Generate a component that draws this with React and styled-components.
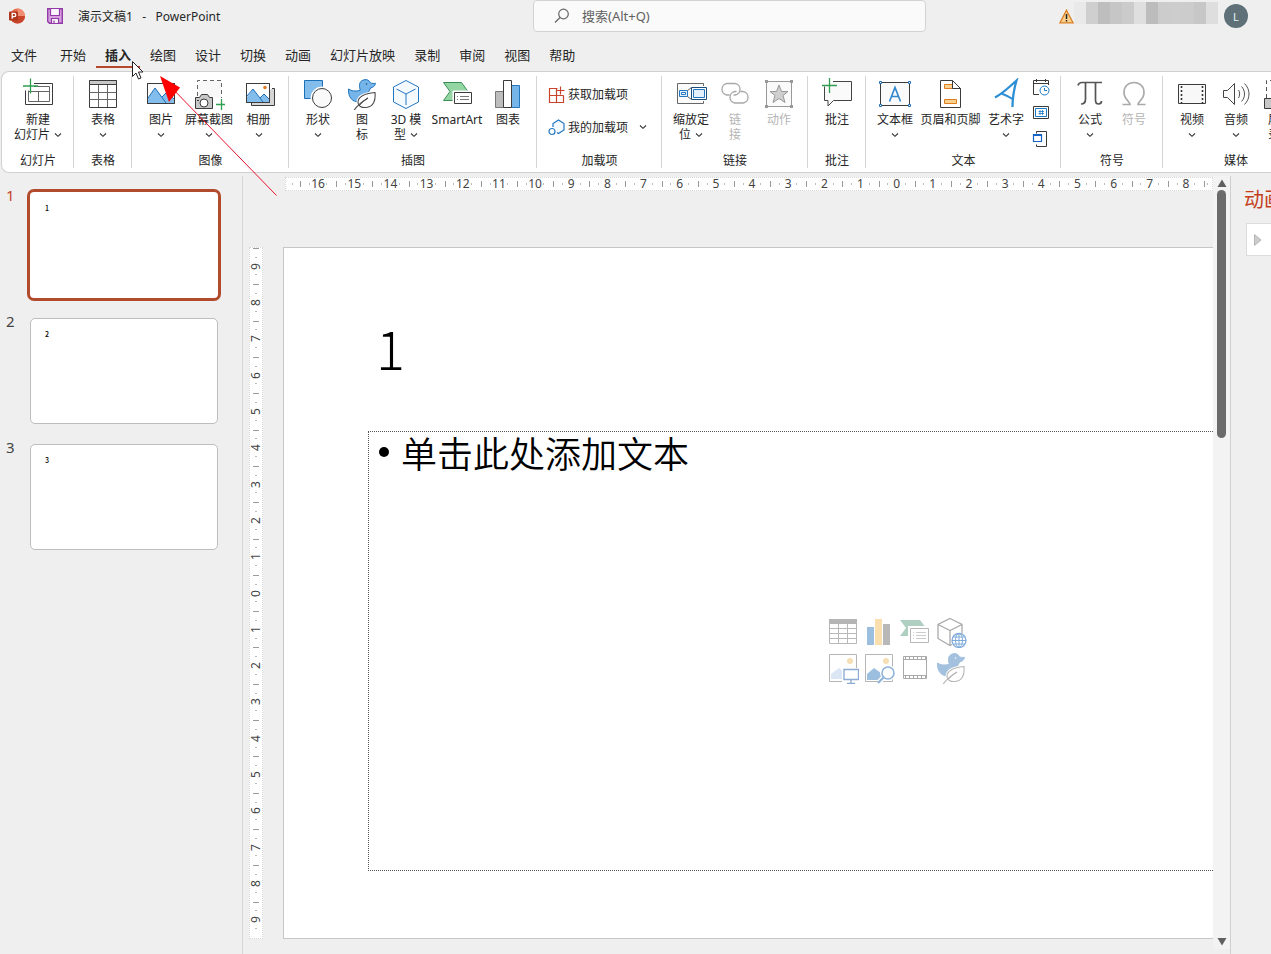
import styled, { createGlobalStyle, css } from 'styled-components';

const GlobalStyle = createGlobalStyle`
    * {
        box-sizing: border-box;
    }

    body {
        margin: 0;
        background: #efefef;
        color: #262626;
        font-family: 'Noto Sans', 'Noto Sans CJK SC', sans-serif;
        font-size: 12px;
    }

    button {
        padding: 0;
        border: 0;
        background: none;
        color: inherit;
        font: inherit;
    }
`;

const Window = styled.div`
    position: relative;
    display: flex;
    flex-direction: column;
    height: 100vh;
    overflow: hidden;
`;

const TitleBar = styled.header`
    display: grid;
    grid-template-columns: 533fr 393fr 345fr;
    height: 32px;
`;

const FileInfo = styled.div`
    display: flex;
    align-items: center;
    gap: 22px;
    padding-left: 9px;

    svg {
        display: block;
    }
`;

const SaveButton = styled.button`
    width: 16px;
    height: 16px;
`;

const FileName = styled.span`
    margin-left: -7px;
    white-space: pre;
`;

const SearchBox = styled.label`
    display: flex;
    align-items: center;
    gap: 12px;
    padding-left: 20px;
    border: 1px solid #d2d2d2;
    border-radius: 4px;
    background: #fafafa;

    input {
        flex: 1;
        min-width: 0;
        padding: 0;
        border: 0;
        outline: 0;
        background: none;
        font: inherit;
        font-size: 13px;
    }

    input::placeholder {
        color: #616161;
    }
`;

const Account = styled.div`
    display: flex;
    align-items: center;
    justify-content: flex-end;
    padding-right: 23px;
`;

const HiddenName = styled.div`
    display: flex;
    height: 22px;
    margin: 0 6px 6px 0;
`;

const NameBlock = styled.span`
    width: 12px;
    background: ${props => props.$tone};
`;

const Avatar = styled.button`
    width: 24px;
    height: 24px;
    border-radius: 50%;
    background: #5f7078;
    color: #e6f3f6;
    font-size: 11px;
`;

const Tabs = styled.nav`
    display: flex;
    gap: 1px;
    padding: 8px 0 3px 2px;
`;

const Tab = styled.button`
    height: 28px;
    padding: 4px 9px 0;
    margin-right: ${props => props.$file ? '4px' : '0'};
    border-bottom: 2px solid ${props => props.$active ? '#b7472a' : 'transparent'};
    font-size: 13px;
    line-height: 22px;
    white-space: nowrap;
    ${props => props.$active && css`
        font-weight: 700;
    `}
`;

const RibbonBar = styled.section`
    display: flex;
    flex: none;
    height: 102px;
    margin-left: 1px;
    overflow: hidden;
    border: 1px solid #d0d0d0;
    border-right: 0;
    border-radius: 8px 0 0 8px;
    background: #fff;
`;

const Group = styled.div`
    display: flex;
    flex: none;
    flex-direction: column;
    justify-content: space-between;
    margin: 4px 0;
    padding: 2px 6px 0 7px;
    border-right: 1px solid #d4d4d4;
`;

const GroupTools = styled.div`
    display: flex;
`;

const GroupName = styled.div`
    line-height: 14px;
    text-align: center;
`;

const ToolButton = styled.button`
    display: flex;
    flex-direction: column;
    align-items: center;
    width: ${props => props.$width || 44}px;
    color: ${props => props.disabled ? '#b4b4b4' : 'inherit'};
    line-height: 15px;
    white-space: nowrap;

    > svg {
        margin-bottom: 2px;
    }
`;

const ToolLine = styled.span`
    display: flex;
    align-items: center;
    justify-content: center;
    gap: 4px;
    height: 15px;
`;

const AddinList = styled.div`
    display: flex;
    flex-direction: column;
    gap: 9px;
    width: 111px;
    padding: 4px 0 0 4px;
`;

const AddinButton = styled.button`
    display: flex;
    align-items: center;
    gap: 3px;
    height: 24px;
    white-space: nowrap;

    svg:nth-of-type(2) {
        margin-left: 8px;
    }
`;

const SmallTools = styled.div`
    display: flex;
    flex-direction: column;
    align-items: center;
    gap: 8px;
    width: 26px;

    button {
        height: 18px;
    }

    svg {
        display: block;
    }
`;

const Workspace = styled.main`
    display: grid;
    flex: 1;
    grid-template-columns: 243px minmax(0, 1fr) 41px;
    min-height: 0;
`;

const SlideList = styled.aside`
    display: flex;
    flex-direction: column;
    gap: 14px;
    margin-top: 3px;
    padding: 13px 0 0 6px;
    border-right: 1px solid #d6d6d6;
`;

const SlideItem = styled.button`
    display: grid;
    grid-template-columns: 21px 194px;
    color: ${props => props.$active ? '#c4442a' : '#444'};
    font-size: 15px;
    line-height: 12px;
    text-align: left;
`;

const Thumb = styled.span`
    height: 112px;
    padding: ${props => props.$active ? '0' : '3px'};

    span {
        display: block;
        height: 100%;
        padding: ${props => props.$active ? '10px 15px' : '9px 14px'};
        border: ${props => props.$active ? '3px solid #b24a2c' : '1px solid #bdbdbd'};
        border-radius: ${props => props.$active ? '7px' : '5px'};
        background: #fff;
        color: #000;
        font-family: 'Noto Sans CJK SC', sans-serif;
        font-size: 7px;
        font-weight: 500;
    }
`;

const Canvas = styled.section`
    display: grid;
    grid-template-columns: 14px minmax(0, 1fr) 17px;
    grid-template-rows: 14px minmax(0, 1fr);
    row-gap: 56px;
    padding: 4px 0 15px 6px;
`;

const Ruler = styled.div`
    display: grid;
    grid-column: 2;
    grid-template-columns: 14fr repeat(25, 36fr) 8fr;
    margin-left: 22px;
    border: 1px dotted #d8d8d8;
    background: #fff;
`;

const RulerCell = styled.span`
    display: flex;
    align-items: center;
    justify-content: center;
    background:
        linear-gradient(#999, #999) 0 50% / 1px 6px no-repeat,
        linear-gradient(#bbb, #bbb) 25% 50% / 1px 2px no-repeat,
        linear-gradient(#bbb, #bbb) 75% 50% / 1px 2px no-repeat;
    color: #444;
    line-height: 12px;
`;

const RulerEdge = styled.span`
    background:
        linear-gradient(#bbb, #bbb) 45% 50% / 1px 2px no-repeat,
        linear-gradient(#999, #999) 0 50% / ${props => props.$end ? '1px' : '0'} 6px no-repeat;
`;

const VerticalRuler = styled.div`
    display: flex;
    flex-direction: column;
    grid-row: 2;
    border: 1px dotted #d8d8d8;
    background: #fff;

    ${RulerCell} {
        flex: 1;
        background:
            linear-gradient(#999, #999) 50% 0 / 6px 1px no-repeat,
            linear-gradient(#bbb, #bbb) 50% 25% / 2px 1px no-repeat,
            linear-gradient(#bbb, #bbb) 50% 75% / 2px 1px no-repeat;
    }

    b {
        font-weight: 400;
        writing-mode: vertical-rl;
        transform: rotate(180deg);
    }
`;

const SlideView = styled.div`
    grid-row: 2;
    grid-column: 2;
    margin-left: 20px;
    overflow: hidden;
    border: 1px solid #c6c6c6;
    border-right: 0;
    background: #fff;
`;

const Slide = styled.article`
    display: flex;
    flex-direction: column;
    height: 100%;
    aspect-ratio: 16 / 9;
    padding: 14px 84px 67px;
    color: #000;
    font-family: 'Noto Sans CJK SC', sans-serif;
`;

const SlideTitle = styled.h1`
    display: flex;
    align-items: center;
    height: 169px;
    margin: 0;
    padding-left: 8px;
    font-size: 54px;
    font-weight: 300;
    line-height: 64px;
`;

const Placeholder = styled.div`
    display: grid;
    flex: 1;
    border: 1px dotted #555;

    > * {
        grid-area: 1 / 1;
    }
`;

const Bullet = styled.p`
    display: flex;
    align-items: center;
    gap: 12px;
    align-self: start;
    margin: 0;
    padding-left: 10px;
    font-size: 36px;
    font-weight: 350;
    line-height: 40px;

    &::before {
        width: 10px;
        height: 10px;
        border-radius: 50%;
        background: #000;
        content: '';
    }
`;

const InsertGrid = styled.div`
    display: grid;
    grid-template-columns: repeat(4, 36px);
    grid-auto-rows: 36px;
    place-self: center;

    svg {
        display: block;
        margin: 1px 2px 3px;
    }
`;

const ScrollBar = styled.div`
    display: flex;
    grid-row: 1 / 3;
    grid-column: 3;
    flex-direction: column;
    align-items: center;
    margin: -1px 0 -10px;
    background: #f3f3f3;

    button {
        height: 14px;
    }

    svg {
        display: block;
    }
`;

const ScrollTrack = styled.div`
    flex: 1;
    width: 9px;

    &::before {
        display: block;
        height: calc(100% / 3);
        border-radius: 5px;
        background: #6b6b6b;
        content: '';
    }
`;

const AnimationPane = styled.aside`
    margin-top: 3px;
    padding: 11px 0 0 13px;
    overflow: hidden;
    border-left: 1px solid #cfcfcf;
    white-space: nowrap;

    h2 {
        margin: 0 0 10px;
        color: #c43e1c;
        font-size: 20px;
        font-weight: 400;
        line-height: 26px;
    }
`;

const PlayButton = styled.button`
    display: flex;
    align-items: center;
    width: 90px;
    height: 33px;
    margin-left: 2px;
    padding-left: 7px;
    border: 1px solid #dcdcdc;
    background: #fff;
`;

const Overlay = styled.svg`
    position: absolute;
    top: 0;
    left: 0;
    pointer-events: none;
`;

const Icon = ({ size = 32, children }) => (
    <svg width={size} height={size} viewBox={`0 0 ${size} ${size}`} fill='none' stroke='#3b3b3b' aria-hidden='true'>
        {children}
    </svg>
);

const Chevron = () => (
    <svg width='8' height='6' viewBox='0 0 8 6' fill='none' stroke='#333' strokeWidth='1.1' aria-hidden='true'>
        <path d='M1 1.5 4 4.3 7 1.5' />
    </svg>
);

const NewSlideIcon = () => (
    <Icon>
        <path d='M12 5.5h18.5v21h-27v-14' />
        <path d='M12 8.5h15.5v15h-21v-11M7 13.500h20M16.5 13.5v10' stroke='#666' />
        <path d='M8.500 .5v15M1 8h15' stroke='#2f9e4f' strokeWidth='1.3' />
    </Icon>
);

const TableIcon = () => (
    <Icon>
        <path d='M2.5 2.5h27v27h-27z' fill='#fff' />
        <path d='M2.5 2.5h27v4h-27z' fill='#c8c8c8' />
        <path d='M2.5 14.5h27M2.5 21.5h27M11.5 7v22M20.5 7v22' stroke='#666' />
    </Icon>
);

const PictureIcon = () => (
    <Icon>
        <path d='M2.5 5.5h27v20h-27z' fill='#fafafa' />
        <path d='M3 20 10 10l7 9 5-5 7 7v4H3z' fill='#83bdec' stroke='none' />
        <path d='m3 20 7-10 11 15M17 19l5-5 7 7' stroke='#1c6fb8' />
        <path d='M2.5 5.5h27v20h-27z' />
    </Icon>
);

const ScreenshotIcon = () => (
    <Icon>
        <path d='M4.5 18V2.5h24V20' fill='#f8f8f8' stroke='#666' strokeDasharray='4 3' />
        <path d='M2.5 19.5h4l2-3h6l2 3h3v11h-17z' fill='#c8c8c8' />
        <circle cx='11' cy='25' r='4' fill='#fff' />
        <path d='M4 22.5h2' />
        <path d='M28.5 21v11M23 26.5h11' stroke='#2f9e4f' strokeWidth='1.3' />
    </Icon>
);

const AlbumIcon = () => (
    <Icon>
        <path d='M29 10.5h2.5v17h-23V24' fill='#d5d5d5' />
        <path d='M3.5 5.5h23v19h-23z' fill='#fff' />
        <path d='m4 19 6-8 7 9 4-4 5 5v3H4z' fill='#83bdec' stroke='none' />
        <path d='m4 18 6-7 10 13M17 20l4-4 5 5' stroke='#1c6fb8' />
        <circle cx='22' cy='9.5' r='1.8' fill='#e07b28' stroke='none' />
        <path d='M3.5 5.5h23v19h-23z' />
    </Icon>
);

const ShapesIcon = () => (
    <Icon>
        <path d='M2.5 2.5h18v18h-18z' fill='#83bdec' stroke='#1c6fb8' />
        <circle cx='20' cy='20' r='11' fill='#fff' stroke='#fff' />
        <circle cx='20' cy='20' r='9.5' fill='#fafafa' />
    </Icon>
);

const DuckShape = ({ pale }) => (
    <>
        <path
            d='M2.5 11c3 2.300 7.500 2.600 11.800 1.200C13.800 10.800 13.500 9 13.500 7.500a5.800 5.800 0 0 1 11-2.600c1.500.5 3.500.8 5 .3-.5 3-2.500 4.300-5 4.800-.5 1.500-1.500 3-2 4L13 24c-6.500 0-11-4.500-10.500-13z'
            fill={pale ? '#a3c1de' : '#75b5e9'} stroke={pale ? '#a3c1de' : '#2476bd'} />
        <circle cx='20.500' cy='6' r='.8' fill={pale ? '#fff' : '#144b7a'} stroke='none' />
        <path
            d='M29 14.500c.8 8-1.500 14.500-9 15-4.500.3-8-1.500-8-5 0-6 7-9 17-10z'
            fill='#fff' stroke='#fff' strokeWidth='3' />
        <path
            d='M29 14.500c.8 8-1.500 14.500-9 15-4.500.3-8-1.500-8-5 0-6 7-9 17-10zM8 32.500c3-5.500 8.500-9 14-12.500'
            fill='#fff' stroke={pale ? '#b5b5b5' : '#4a4a4a'} strokeWidth='1.100' />
        <path d='M13 28c2.500-3.500 5.500-5.800 9-8' stroke={pale ? '#b5b5b5' : '#4a4a4a'} />
    </>
);

const ModelIcon = () => (
    <Icon>
        <path d='m16 2.5 12.500 6.500v15L16 30.500 3.500 24V9z' fill='#f5faff' stroke='#2277c2' />
        <path d='m6.500 11 9.500 5 9.500-5M16 16v11' stroke='#2277c2' />
    </Icon>
);

const SmartArtIcon = () => (
    <Icon>
        <path d='M2.500 4.500h18l6.500 9-6.500 9h-18l6.500-9z' fill='#93d6a4' stroke='#398e55' />
        <path d='M12 13h20v14H12z' fill='#fff' stroke='#fff' />
        <path d='M13.500 14.500h17v11h-17z' fill='#fff' />
        <path d='M16 18.500h1M19 18.500h9M16 21.500h1M19 21.500h9' stroke='#777' />
    </Icon>
);

const ChartIcon = () => (
    <Icon>
        <path d='M3.500 13.500h8v16h-8z' fill='#bdbdbd' stroke='#777' />
        <path d='M19.500 7.500h8v22h-8z' fill='#75b5e9' stroke='#2476bd' />
        <path d='M11.500 2.500h8v27h-8z' fill='#fff' />
    </Icon>
);

const ZoomIcon = () => (
    <Icon>
        <path d='M2.500 5.500h26v20h-26z' fill='#fafafa' stroke='#666' />
        <path d='M15 8h18v15H15z' fill='#fff' stroke='none' />
        <path d='M4.500 12.500h8v6h-8z' fill='#e2f1fb' stroke='#2277c2' />
        <path d='M6.500 14.500h4v2h-4z' fill='#fff' stroke='#2277c2' />
        <path d='m12.500 12.500 4-3M12.500 18.500l4 3' stroke='#666' />
        <path d='M16.500 9.500h15v12h-15z' fill='#fff' stroke='#1d4e7c' />
        <path d='M18.500 11.500h11v8h-11z' fill='#e2f1fb' stroke='#2277c2' />
    </Icon>
);

const LinkIcon = () => (
    <Icon>
        <path
            d='M10.500 17H8a5.800 5.800 0 0 1 0-11.500h8a5.800 5.800 0 0 1 0 11.500h-1.500M21.500 13.500H24a5.800 5.800 0 0 1 0 11.500h-8a5.800 5.800 0 0 1 0-11.500h1.500'
            stroke='#a8a8a8' strokeWidth='1.300' />
    </Icon>
);

const ActionIcon = () => (
    <Icon>
        <path d='M3.500 3.500h25v25h-25z' fill='#fafafa' stroke='#999' />
        <path d='m16 7 2.500 6.500h6.500l-5 4 2 7-6-4-6 4 2-7-5-4h6.500z' fill='#cfcfcf' stroke='#999' />
        <path d='M2 2h3v3H2zM27 2h3v3h-3zM2 27h3v3H2zM27 27h3v3h-3z' fill='#999' stroke='none' />
    </Icon>
);

const CommentIcon = () => (
    <Icon>
        <path d='M12 3.500h18.500v19h-18l-5.500 5.500v-5.500h-3.500v-14' fill='#fafafa' stroke='#444' />
        <path d='M8.500 0v15M1 7.500h15' stroke='#2f9e4f' strokeWidth='1.300' />
    </Icon>
);

const TextBoxIcon = () => (
    <Icon>
        <path d='M1.500 4.500h29v23h-29z' fill='#fafafa' />
        <path d='m10.500 23.500 5.500-14 5.500 14M12.500 18.500h7' stroke='#2f86cc' strokeWidth='1.600' />
        <path d='M.5 3.500h2v2h-2zM29.500 3.500h2v2h-2zM.5 26.500h2v2h-2zM29.500 26.500h2v2h-2z' fill='#fff' stroke='#1c6fb8' />
    </Icon>
);

const HeaderFooterIcon = () => (
    <Icon>
        <path d='M5.500 2.500h12l8 8v19h-20z' fill='#fff' />
        <path d='M9.500 6.500h8v4h-8zM9.500 21.500h12v4h-12z' fill='#fcd18f' stroke='#dd7d1d' />
        <path d='M17.500 2.500v8h8z' fill='#fff' />
    </Icon>
);

const WordArtIcon = () => (
    <Icon>
        <path d='M5 19.500c7-3.500 14-10 21.500-17C24 11 22.500 20 22.500 29' stroke='#2d8fd6' strokeWidth='2.300' />
        <path d='M11.500 15.500c4 1.500 8 3.500 12 6' stroke='#2d8fd6' strokeWidth='2' />
    </Icon>
);

const EquationIcon = () => (
    <Icon>
        <path d='M4 7.500c.5-2 1.500-3 4-3h20M11.500 5v16c0 3-1 5-4.500 5M21.500 5v17c0 3 1 4 3 4 2 0 3-1 3-3' stroke='#555' strokeWidth='1.700' />
    </Icon>
);

const SymbolIcon = () => (
    <Icon>
        <path
            d='M4.500 26.500H12c0-3-6-5-6-12 0-6 4-10 10-10s10 4 10 10c0 7-6 9-6 12h7.500'
            stroke='#aaa' strokeWidth='1.700' />
    </Icon>
);

const VideoIcon = () => (
    <Icon>
        <path d='M2.500 6.500h27v19h-27z' fill='#f8f8f8' />
        <path d='M5.500 8v17M26.500 8v17' stroke='#333' strokeWidth='1.600' strokeDasharray='2 2' />
    </Icon>
);

const AudioIcon = () => (
    <Icon>
        <path d='M3.500 12.500h4l7-7v21l-7-7h-4z' fill='#fafafa' stroke='#444' />
        <path d='M18.500 12c1.500 2 1.500 6 0 8M21.500 8.500c4 4 4 11 0 15M24.500 5.500c6 6 6 15 0 21' stroke='#555' />
    </Icon>
);

const RecordIcon = () => (
    <Icon>
        <path d='M2.500 20V2.500h24V20' stroke='#555' strokeDasharray='4 3' />
        <path d='M.5 20.500h17v10H.5z' fill='#c8c8c8' />
    </Icon>
);

const tabs = ['文件', '开始', '插入', '绘图', '设计', '切换', '动画', '幻灯片放映', '录制', '审阅', '视图', '帮助'];

const nameTones = ['#e9e9e9', '#cfcfcf', '#bebebe', '#c6c6c6', '#cbcbcb', '#dfdfdf', '#bcbcbc', '#cccccc', '#cdcdcd', '#cccccc', '#c7c7c7', '#dedede'];

const insertGroup = [
    { name: '幻灯片', tools: [{ lines: ['新建', '幻灯片'], icon: <NewSlideIcon />, menu: true, width: 58 }] },
    { name: '表格', tools: [{ lines: ['表格'], icon: <TableIcon />, menu: true }] },
    {
        name: '图像',
        tools: [
            { lines: ['图片'], icon: <PictureIcon />, menu: true },
            { lines: ['屏幕截图'], icon: <ScreenshotIcon />, menu: true, width: 52 },
            { lines: ['相册'], icon: <AlbumIcon />, menu: true, width: 47 },
        ],
    },
    {
        name: '插图',
        tools: [
            { lines: ['形状'], icon: <ShapesIcon />, menu: true },
            { lines: ['图', '标'], icon: <Icon><DuckShape /></Icon> },
            { lines: ['3D 模', '型'], icon: <ModelIcon />, menu: true },
            { lines: ['SmartArt'], icon: <SmartArtIcon />, width: 58 },
            { lines: ['图表'], icon: <ChartIcon /> },
        ],
    },
    { name: '加载项', addins: true },
    {
        name: '链接',
        tools: [
            { lines: ['缩放定', '位'], icon: <ZoomIcon />, menu: true },
            { lines: ['链', '接'], icon: <LinkIcon />, disabled: true },
            { lines: ['动作'], icon: <ActionIcon />, disabled: true },
        ],
    },
    { name: '批注', tools: [{ lines: ['批注'], icon: <CommentIcon /> }] },
    {
        name: '文本',
        small: true,
        tools: [
            { lines: ['文本框'], icon: <TextBoxIcon />, menu: true },
            { lines: ['页眉和页脚'], icon: <HeaderFooterIcon />, width: 67 },
            { lines: ['艺术字'], icon: <WordArtIcon />, menu: true },
        ],
    },
    {
        name: '符号',
        tools: [
            { lines: ['公式'], icon: <EquationIcon />, menu: true },
            { lines: ['符号'], icon: <SymbolIcon />, disabled: true },
        ],
    },
    {
        name: '媒体',
        tools: [
            { lines: ['视频'], icon: <VideoIcon />, menu: true },
            { lines: ['音频'], icon: <AudioIcon />, menu: true },
            { lines: ['屏幕', '录制'], icon: <RecordIcon /> },
        ],
    },
];

const Tool = ({ lines, icon, menu, width, disabled }) => (
    <ToolButton type='button' $width={width} disabled={disabled}>
        {icon}
        <ToolLine>{lines[0]}</ToolLine>
        {(lines[1] || menu) && <ToolLine>{lines[1]}{menu && <Chevron />}</ToolLine>}
    </ToolButton>
);

const Addins = () => (
    <AddinList>
        <AddinButton type='button'>
            <Icon size={17}>
                <path d='M9.500 2.500h-8v14h14v-7M1.500 9.500h14M8.500 2.500v14M12.500 .5v8M9 4.500h7.500' stroke='#c8452b' strokeWidth='1.200' />
            </Icon>
            获取加载项
        </AddinButton>
        <AddinButton type='button'>
            <Icon size={17}>
                <path d='M5 8V4.500L10.500 1 16 4.500V11l-5.500 3.500L9 13.500' fill='#f4faff' stroke='#2277c2' strokeWidth='1.200' />
                <circle cx='4' cy='12.500' r='3' fill='#fff' stroke='#2277c2' strokeWidth='1.200' />
            </Icon>
            我的加载项
            <Chevron />
        </AddinButton>
    </AddinList>
);

const TextExtras = () => (
    <SmallTools>
        <button type='button' aria-label='日期和时间'>
            <Icon size={18}>
                <path d='M7 16.500H1.500v-14h15V7M1.500 5.500h15M4.500 1v3M13.500 1v3' />
                <circle cx='12.500' cy='12.500' r='4.500' fill='#fff' stroke='#1c7ac4' />
                <path d='M12.500 10v2.500H15' stroke='#1c7ac4' />
            </Icon>
        </button>
        <button type='button' aria-label='幻灯片编号'>
            <Icon size={18}>
                <path d='M1.500 2.500h15v12h-15z' fill='#fff' />
                <path d='M3.500 4.500h11v8h-11z' stroke='#1c7ac4' />
                <path d='M8 6v5M10.500 6v5M6.500 7.500h5.500M6.500 9.500h5.500' stroke='#1c7ac4' strokeWidth='.8' />
            </Icon>
        </button>
        <button type='button' aria-label='对象'>
            <Icon size={18}>
                <path d='M4.500 3.500v-2h10v15h-10v-2' />
                <path d='M1.500 4.500h8v7h-8zM1.500 5.500h8' fill='#fff' stroke='#1663c7' strokeWidth='1.200' />
            </Icon>
        </button>
    </SmallTools>
);

const contentIcons = [
    {
        label: '插入表格',
        art: (
            <>
                <path d='M2.500 3.500h27v24h-27zM2.500 12.500h27M2.500 17.500h27M2.500 22.500h27M11.500 8v20M20.500 8v20' stroke='#b8b8b8' />
                <path d='M2 3h28v5H2z' fill='#b5b5b5' stroke='none' />
            </>
        ),
    },
    {
        label: '插入图表',
        art: (
            <>
                <path d='M4 11h7v18H4z' fill='#9dbfdf' stroke='none' />
                <path d='M12 3h7v26h-7z' fill='#f9dfad' stroke='none' />
                <path d='M20 8h7v21h-7z' fill='#b8b8b8' stroke='none' />
            </>
        ),
    },
    {
        label: '插入 SmartArt 图形',
        art: (
            <>
                <path d='M1 4h20l6 8-6 8H1l6-8z' fill='#afcfc0' stroke='none' />
                <path d='M10.500 11.500h20v16h-20z' fill='#fff' stroke='#fff' strokeWidth='3' />
                <path d='M11.500 12.500h18v14h-18z' fill='#fff' stroke='#b8b8b8' />
                <path d='M14 16.500h1M17 16.500h10M14 19.500h1M17 19.500h10M14 22.500h1M17 22.500h10' stroke='#ccc' />
            </>
        ),
    },
    {
        label: '3D 模型',
        art: (
            <>
                <path d='m15 2.500 12 6v14l-12 7-12-7v-14zM3 8.500l12 6 12-6M15 14.500v15' stroke='#aaa' strokeWidth='1.300' />
                <circle cx='24' cy='24.500' r='8' fill='#fff' stroke='none' />
                <circle cx='24' cy='24.500' r='7' stroke='#7fabda' strokeWidth='1.300' />
                <path d='M17 24.500h14M18 21h12M18 28h12M24 17.500v14' stroke='#7fabda' />
                <ellipse cx='24' cy='24.500' rx='3.500' ry='7' stroke='#7fabda' />
            </>
        ),
    },
    {
        label: '图片',
        art: (
            <>
                <path d='M2.500 2.500h27v27h-27z' stroke='#b5b5b5' />
                <circle cx='23' cy='9' r='3' fill='#f5dfb4' stroke='none' />
                <path d='M4 27v-5l8-6 5 4v7z' fill='#dbe6f5' stroke='none' />
                <path d='M15 16h18v16H15z' fill='#fff' stroke='none' />
                <path d='M17 17.500h14.500v10H17zM24 28v3M20 31.500h8' stroke='#8eacd3' strokeWidth='1.400' />
            </>
        ),
    },
    {
        label: '联机图片',
        art: (
            <>
                <path d='M2.500 2.500h27v27h-27z' stroke='#b5b5b5' />
                <circle cx='23' cy='9' r='3' fill='#f5dfb4' stroke='none' />
                <path d='M4 28v-6l7-6 7 5v7z' fill='#9dbfdf' stroke='none' />
                <path d='m16 30 6-6' stroke='#fff' strokeWidth='5' />
                <circle cx='25' cy='21' r='8' fill='#fff' stroke='none' />
                <circle cx='25' cy='21' r='6' stroke='#8fb3da' strokeWidth='1.600' />
                <path d='m15 31 6-6' stroke='#8fb3da' strokeWidth='2.200' />
            </>
        ),
    },
    {
        label: '插入视频',
        art: (
            <>
                <path d='M4.500 4.500h23v22h-23zM4.500 7.500h23M4.500 23.500h23' stroke='#aaa' />
                <path d='M6 6h21M6 25h21' stroke='#aaa' strokeWidth='3' strokeDasharray='1 3' />
            </>
        ),
    },
    { label: '插入图标', art: <DuckShape pale /> },
];

const marks = Array.from({ length: 25 }, (_, i) => Math.abs(i - 16));
const verticalMarks = Array.from({ length: 19 }, (_, i) => Math.abs(i - 9));

const App = () => {
    return (
        <>
            <GlobalStyle />
            <Window>
                <TitleBar>
                    <FileInfo>
                        <svg width='16' height='16' viewBox='0 0 16 16' aria-hidden='true'>
                            <circle cx='8.500' cy='8' r='7.500' fill='#e5694a' />
                            <path d='M8.500 .5A7.500 7.500 0 0 1 16 8H8.500z' fill='#f08d72' />
                            <path d='M1 8h15a7.500 7.500 0 0 1-15 0z' fill='#c8452b' />
                            <rect y='3.500' width='9' height='9' rx='1' fill='#b0361b' />
                            <path d='M3.200 10.800V5.300h1.900a1.700 1.700 0 0 1 0 3.400H3.200' fill='none' stroke='#fff' strokeWidth='1.300' />
                        </svg>
                        <SaveButton type='button' aria-label='保存'>
                            <svg width='16' height='16' viewBox='0 0 16 16' fill='none' stroke='#9439a8'>
                                <path d='M.7.700h14.600v14.600H2.500L.7 13.500z' fill='#d7a1e0' strokeWidth='1.400' />
                                <path d='M3.500 1v6.500h9V1M4.500 15v-4.500h7V15M7 12.500V15' fill='#fbf4fc' strokeWidth='1.200' />
                            </svg>
                        </SaveButton>
                        <FileName>{'演示文稿1   -   PowerPoint'}</FileName>
                    </FileInfo>
                    <SearchBox>
                        <svg width='16' height='16' viewBox='0 0 16 16' fill='none' stroke='#666' strokeWidth='1.200' aria-hidden='true'>
                            <circle cx='9.500' cy='6' r='4.800' />
                            <path d='m6 9.500-5 5' />
                        </svg>
                        <input type='text' placeholder='搜索(Alt+Q)' aria-label='搜索' />
                    </SearchBox>
                    <Account>
                        <svg width='15' height='15' viewBox='0 0 15 15' aria-hidden='true'>
                            <path d='M7.500 1.200 14 13.800H1z' fill='#fbd08d' stroke='#dc7f22' strokeWidth='1.300' />
                            <path d='M7.500 5v5M7.500 11v1.500' stroke='#222' strokeWidth='1.500' />
                        </svg>
                        <HiddenName>
                            {nameTones.map((tone, i) => <NameBlock key={i} $tone={tone} />)}
                        </HiddenName>
                        <Avatar type='button'>L</Avatar>
                    </Account>
                </TitleBar>

                <Tabs>
                    {tabs.map(t => (
                        <Tab key={t} type='button' $active={t === '插入'} $file={t === '文件'}>{t}</Tab>
                    ))}
                </Tabs>

                <RibbonBar>
                    {insertGroup.map(g => (
                        <Group key={g.name}>
                            <GroupTools>
                                {g.addins && <Addins />}
                                {g.tools?.map(t => <Tool key={t.lines[0]} {...t} />)}
                                {g.small && <TextExtras />}
                            </GroupTools>
                            <GroupName>{g.name}</GroupName>
                        </Group>
                    ))}
                </RibbonBar>

                <Workspace>
                    <SlideList>
                        {[1, 2, 3].map(n => (
                            <SlideItem key={n} type='button' $active={n === 1}>
                                {n}
                                <Thumb $active={n === 1}><span>{n}</span></Thumb>
                            </SlideItem>
                        ))}
                    </SlideList>

                    <Canvas>
                        <Ruler>
                            <RulerEdge />
                            {marks.map((m, i) => <RulerCell key={i}>{m}</RulerCell>)}
                            <RulerEdge $end />
                        </Ruler>
                        <VerticalRuler>
                            {verticalMarks.map((m, i) => <RulerCell key={i}><b>{m}</b></RulerCell>)}
                        </VerticalRuler>
                        <SlideView>
                            <Slide>
                                <SlideTitle>1</SlideTitle>
                                <Placeholder>
                                    <Bullet>单击此处添加文本</Bullet>
                                    <InsertGrid>
                                        {contentIcons.map(c => (
                                            <button key={c.label} type='button' aria-label={c.label}>
                                                <Icon>{c.art}</Icon>
                                            </button>
                                        ))}
                                    </InsertGrid>
                                </Placeholder>
                            </Slide>
                        </SlideView>
                        <ScrollBar>
                            <button type='button' aria-label='向上滚动'>
                                <svg width='10' height='10' viewBox='0 0 10 10'><path d='M5 1.500 9.500 9h-9z' fill='#606060' /></svg>
                            </button>
                            <ScrollTrack />
                            <button type='button' aria-label='向下滚动'>
                                <svg width='10' height='10' viewBox='0 0 10 10'><path d='M.5 1h9L5 8.500z' fill='#606060' /></svg>
                            </button>
                        </ScrollBar>
                    </Canvas>

                    <AnimationPane>
                        <h2>动画窗格</h2>
                        <PlayButton type='button' aria-label='播放'>
                            <svg width='8' height='12' viewBox='0 0 8 12'><path d='M.5.500 7 6 .5 11.500z' fill='#ccc' stroke='#b5b5b5' /></svg>
                        </PlayButton>
                    </AnimationPane>
                </Workspace>

                <Overlay width='300' height='200' viewBox='0 0 300 200' aria-hidden='true'>
                    <path d='m168 84 108.500 111.500' stroke='#e8122c' />
                    <path d='m160 76 20 11.500L169 102z' fill='#fe0000' />
                    <path d='M132.500 61.500v15l3.500-3.500 2.500 6 2.500-1-2.500-6h4.500z' fill='#fff' stroke='#222' />
                </Overlay>
            </Window>
        </>
    );
};

export default App;
